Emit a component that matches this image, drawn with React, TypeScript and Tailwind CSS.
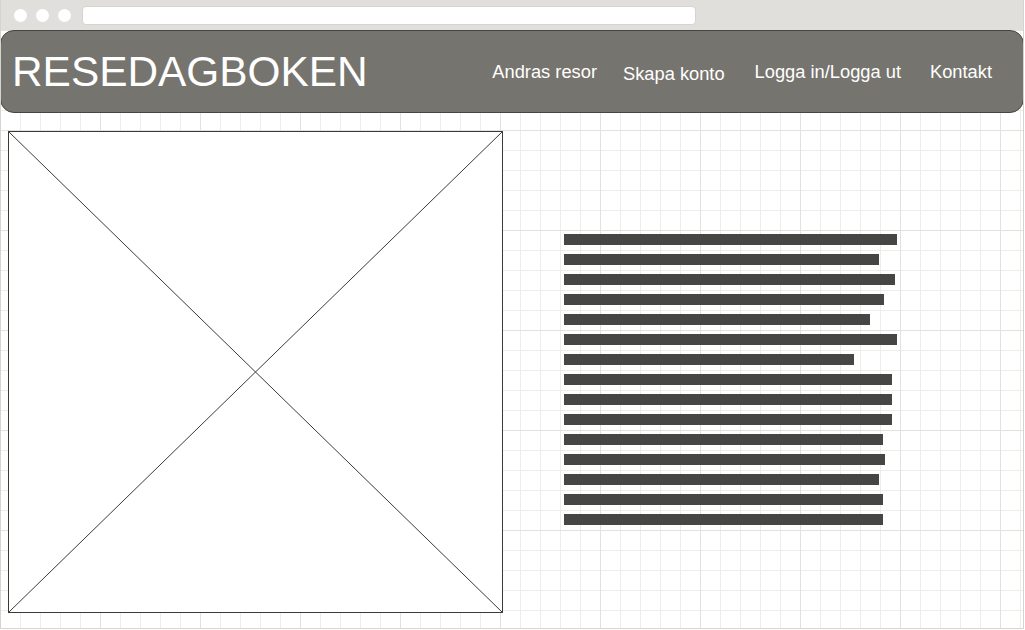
import React from 'react'

const navItems = [
  { label: 'Andras resor', cls: 'ml-auto' },
  { label: 'Skapa konto', cls: 'ml-[26px] mt-[4px]' },
  { label: 'Logga in/Logga ut', cls: 'ml-[30px]' },
  { label: 'Kontakt', cls: 'ml-[29px]' },
]

// text line widths in px
const lines = [333, 315, 331, 320, 306, 333, 290, 328, 328, 328, 319, 321, 315, 319, 319]

function ImagePlaceholder() {
  return (
    <div className="h-[482px] w-[495px] shrink-0 border border-[#3a3a38] bg-white">
      <svg className="block h-full w-full" viewBox="0 0 493 480" preserveAspectRatio="none">
        <line x1="0" y1="0" x2="493" y2="480" stroke="#3a3a38" strokeWidth="1" />
        <line x1="493" y1="0" x2="0" y2="480" stroke="#3a3a38" strokeWidth="1" />
      </svg>
    </div>
  )
}

export default function App() {
  return (
    <div className="flex h-[629px] w-[1024px] flex-col overflow-hidden border-x border-b border-[#d6d4cf] bg-white font-['Liberation_Sans',Arial,sans-serif]">
      {/* browser chrome */}
      <div className="-mx-px flex h-[30px] shrink-0 items-center bg-[#e1dfdb] pl-[14px]">
        <span className="h-[13px] w-[13px] rounded-full bg-white" />
        <span className="ml-[9px] h-[13px] w-[13px] rounded-full bg-white" />
        <span className="ml-[9px] h-[13px] w-[13px] rounded-full bg-white" />
        <div className="ml-[11px] h-[19px] w-[614px] rounded-[4px] border border-[#d6d4cf] bg-white" />
      </div>

      <div className="flex-1 bg-[image:linear-gradient(to_right,#e3e1dd_1px,transparent_1px),linear-gradient(to_bottom,#e3e1dd_1px,transparent_1px),linear-gradient(to_right,#eeede9_1px,transparent_1px),linear-gradient(to_bottom,#eeede9_1px,transparent_1px)] bg-[size:100px_100px,100px_100px,20px_20px,20px_20px] bg-[position:-1px_0]">
        <header className="-mx-px flex h-[83px] items-center rounded-[14px] border border-[#454543] bg-[#76746e] pl-[11px] pr-[31px] text-white">
          <h1 className="text-[42.4px] leading-[48px] font-normal">RESEDAGBOKEN</h1>
          {navItems.map((n) => (
            <a key={n.label} className={`${n.cls} text-[18.3px] leading-[21px]`}>
              {n.label}
            </a>
          ))}
        </header>

        <div className="flex items-start pl-[7px] pt-[18px]">
          <ImagePlaceholder />
          <div className="ml-[61px] mt-[103px] flex flex-col gap-[9px]">
            {lines.map((w, i) => (
              <div key={i} className="h-[11px] bg-[#464644]" style={{ width: w }} />
            ))}
          </div>
        </div>
      </div>
    </div>
  )
}
